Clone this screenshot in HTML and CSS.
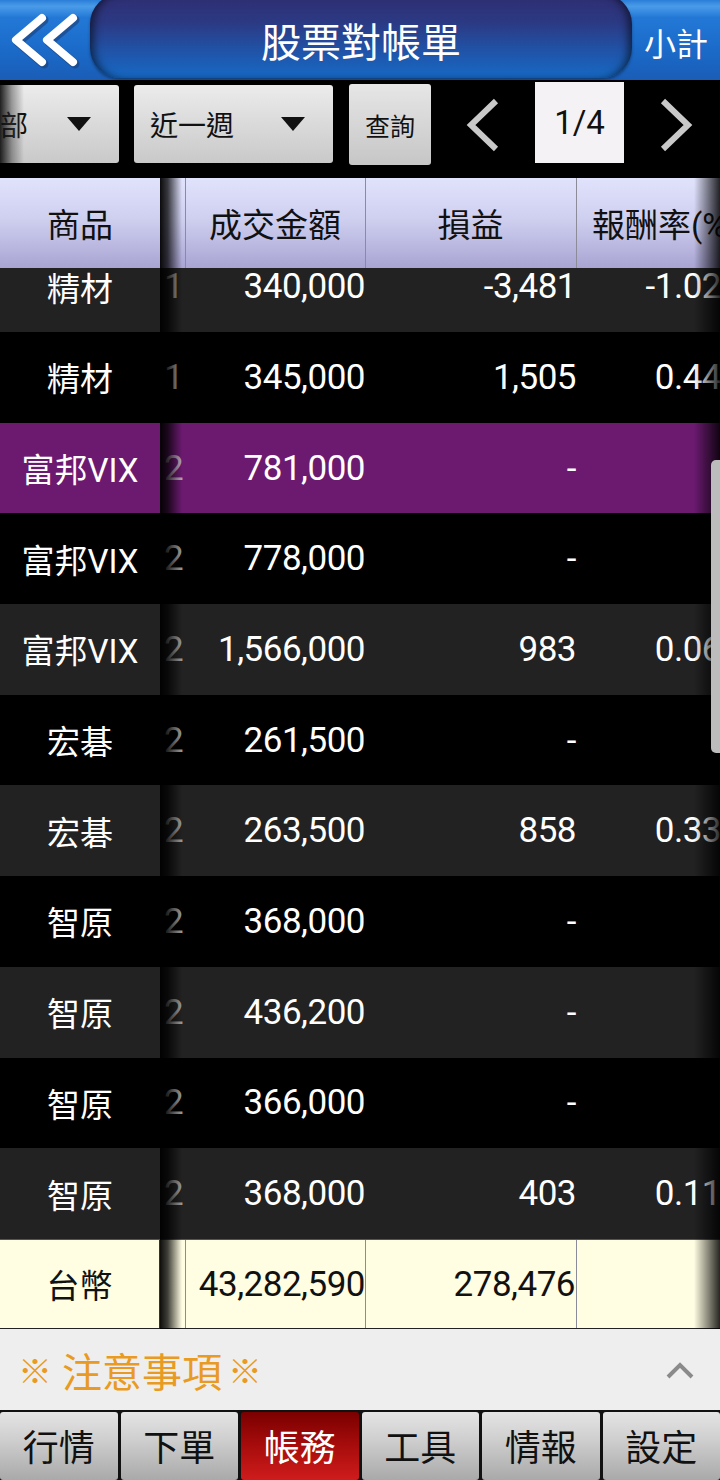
FILE: index.html
```html
<!DOCTYPE html>
<html>
<head>
	<meta charset="utf-8">
	<title>股票對帳單</title>
	<link rel="stylesheet" href="styles.css">
</head>
<body>
	<div class="app">
		<header class="topbar">
			<a class="back">
				<svg width="90" height="80" viewBox="0 0 90 80">
					<g fill="none" stroke="#1b3f78" stroke-width="9" stroke-linecap="round" stroke-linejoin="round" transform="translate(2,2)" opacity="0.6">
						<polyline points="42,18 16,40 42,62"/>
						<polyline points="73,18 47,40 73,62"/>
					</g>
					<g fill="none" stroke="#ffffff" stroke-width="8" stroke-linecap="round" stroke-linejoin="round">
						<polyline points="42,18 16,40 42,62"/>
						<polyline points="73,18 47,40 73,62"/>
					</g>
				</svg>
			</a>
			<div class="title">股票對帳單</div>
			<a class="subtotal">小計</a>
		</header>

		<div class="toolbar">
			<div class="select scope">
				<span>全部</span>
				<svg class="caret" width="24" height="14" viewBox="0 0 24 14"><polygon points="0,0 24,0 12,14" fill="#111"/></svg>
			</div>
			<div class="select period">
				<span>近一週</span>
				<svg class="caret" width="24" height="14" viewBox="0 0 24 14"><polygon points="0,0 24,0 12,14" fill="#111"/></svg>
			</div>
			<button class="query">查詢</button>
			<a class="pager">
				<svg width="36" height="56" viewBox="0 0 36 56"><polyline points="31,4 6,28 31,52" fill="none" stroke="#c9c9c9" stroke-width="6"/></svg>
			</a>
			<div class="page">1/4</div>
			<a class="pager next">
				<svg width="36" height="56" viewBox="0 0 36 56"><polyline points="5,4 30,28 5,52" fill="none" stroke="#c9c9c9" stroke-width="6"/></svg>
			</a>
		</div>

		<div class="grid">
			<div class="row thead">
				<div class="cell name">商品</div>
				<div class="cell qty"></div>
				<div class="cell amt">成交金額</div>
				<div class="cell pnl">損益</div>
				<div class="cell rate">報酬率(%)</div>
			</div>

			<div class="tbody">
				<div class="list">
					<div class="row">
						<div class="cell name">精材</div>
						<div class="cell qty">1</div>
						<div class="cell amt">340,000</div>
						<div class="cell pnl">-3,481</div>
						<div class="cell rate">-1.02</div>
					</div>
					<div class="row">
						<div class="cell name">精材</div>
						<div class="cell qty">1</div>
						<div class="cell amt">345,000</div>
						<div class="cell pnl">1,505</div>
						<div class="cell rate">0.44</div>
					</div>
					<div class="row selected">
						<div class="cell name">富邦VIX</div>
						<div class="cell qty">2</div>
						<div class="cell amt">781,000</div>
						<div class="cell pnl">-</div>
						<div class="cell rate"></div>
					</div>
					<div class="row">
						<div class="cell name">富邦VIX</div>
						<div class="cell qty">2</div>
						<div class="cell amt">778,000</div>
						<div class="cell pnl">-</div>
						<div class="cell rate"></div>
					</div>
					<div class="row">
						<div class="cell name">富邦VIX</div>
						<div class="cell qty">2</div>
						<div class="cell amt">1,566,000</div>
						<div class="cell pnl">983</div>
						<div class="cell rate">0.06</div>
					</div>
					<div class="row">
						<div class="cell name">宏碁</div>
						<div class="cell qty">2</div>
						<div class="cell amt">261,500</div>
						<div class="cell pnl">-</div>
						<div class="cell rate"></div>
					</div>
					<div class="row">
						<div class="cell name">宏碁</div>
						<div class="cell qty">2</div>
						<div class="cell amt">263,500</div>
						<div class="cell pnl">858</div>
						<div class="cell rate">0.33</div>
					</div>
					<div class="row">
						<div class="cell name">智原</div>
						<div class="cell qty">2</div>
						<div class="cell amt">368,000</div>
						<div class="cell pnl">-</div>
						<div class="cell rate"></div>
					</div>
					<div class="row">
						<div class="cell name">智原</div>
						<div class="cell qty">2</div>
						<div class="cell amt">436,200</div>
						<div class="cell pnl">-</div>
						<div class="cell rate"></div>
					</div>
					<div class="row">
						<div class="cell name">智原</div>
						<div class="cell qty">2</div>
						<div class="cell amt">366,000</div>
						<div class="cell pnl">-</div>
						<div class="cell rate"></div>
					</div>
					<div class="row">
						<div class="cell name">智原</div>
						<div class="cell qty">2</div>
						<div class="cell amt">368,000</div>
						<div class="cell pnl">403</div>
						<div class="cell rate">0.11</div>
					</div>
				</div>
			</div>

			<div class="row tfoot">
				<div class="cell name">台幣</div>
				<div class="cell qty"></div>
				<div class="cell amt">43,282,590</div>
				<div class="cell pnl">278,476</div>
				<div class="cell rate"></div>
			</div>

			<div class="shade-left"></div>
			<div class="shade-right"></div>
			<div class="scrollbar"></div>
		</div>

		<div class="notice">
			<span class="mark">※</span>
			<span class="notice-title">注意事項</span>
			<span class="mark">※</span>
			<svg class="toggle" width="28" height="18" viewBox="0 0 28 18"><polyline points="2,16 14,4 26,16" fill="none" stroke="#8a8a8a" stroke-width="4"/></svg>
		</div>

		<nav class="tabs">
			<a class="tab">行情</a>
			<a class="tab">下單</a>
			<a class="tab active">帳務</a>
			<a class="tab">工具</a>
			<a class="tab">情報</a>
			<a class="tab">設定</a>
		</nav>
	</div>
</body>
</html>
```

FILE: styles.css
```css
*{
	margin: 0;
	padding: 0;
	box-sizing: border-box;
}

body{
	width: 720px;
	height: 1480px;
	overflow: hidden;
	background-color: #000;
	font: normal 32px "Noto Sans CJK TC", "Noto Sans", sans-serif;
	color: #fff;
}

.app{
	display: flex;
	flex-direction: column;
	width: 720px;
	height: 1480px;
}

/* top bar */

.topbar{
	display: flex;
	height: 80px;
	background: linear-gradient(#2b7ed8 0%, #4a9ce8 8%, #2378d6 22%, #1b6bca 60%, #1a5db6 100%);
}

.back{
	display: flex;
	width: 90px;
}

.title{
	width: 542px;
	height: 84px;
	margin-top: -6px;
	border-radius: 30px;
	background: linear-gradient(#2f2d70 0%, #2b3a84 35%, #1f55aa 70%, #1769c4 100%);
	box-shadow: inset 8px 0 8px -4px rgba(0,0,0,.55), inset -8px 0 8px -4px rgba(0,0,0,.55), 0 2px 3px rgba(0,0,0,.35);

	font-size: 40px;
	line-height: 92px;
	text-align: center;
	color: #fff;
}

.subtotal{
	flex: 1;
	font-size: 32px;
	line-height: 84px;
	text-align: center;
	color: #fff;
}

/* toolbar */

.toolbar{
	position: relative;
	display: flex;
	align-items: flex-start;
	height: 98px;
	padding-top: 2px;
	overflow: hidden;
	color: #111;
}

.toolbar::before{
	content: "";
	position: absolute;
	left: 0;
	top: 5px;
	width: 24px;
	height: 78px;
	background: linear-gradient(to right, rgba(10,10,10,.9), rgba(60,60,60,.45) 50%, rgba(200,200,200,0));
}

.select{
	display: flex;
	align-items: center;
	justify-content: space-between;
	height: 78px;
	margin-top: 3px;
	padding: 0 28px 0 16px;
	border-radius: 3px;
	background: linear-gradient(#ececec, #dadada 50%, #c9c9c9);
	font-size: 28px;
}

.scope{
	width: 163px;
	margin-left: -44px;
}

.period{
	width: 199px;
	margin-left: 15px;
}

.query{
	width: 82px;
	height: 81px;
	margin: 2px 0 0 16px;
	border: 0;
	border-radius: 3px;
	background: linear-gradient(#e6e6e6, #d6d6d6 50%, #c6c6c6);
	font: normal 25px "Noto Sans CJK TC", sans-serif;
	color: #111;
}

.pager{
	display: flex;
	align-items: center;
	justify-content: center;
	width: 104px;
	height: 80px;
	padding-top: 6px;
}

.pager.next{
	width: 96px;
	padding-left: 8px;
}

.page{
	width: 89px;
	height: 81px;
	background-color: #f4f2f4;
	font-family: Roboto, "Noto Sans CJK TC", sans-serif;
	font-size: 33px;
	line-height: 81px;
	text-align: center;
	color: #111;
}

/* grid */

.grid{
	position: relative;
	display: flex;
	flex-direction: column;
	height: 1151px;
	overflow: hidden;
	font-family: Roboto, "Noto Sans CJK TC", sans-serif;
	font-size: 35px;
	letter-spacing: -0.5px;
}

.row{
	display: flex;
	flex-shrink: 0;
	height: 90.7px;
	align-items: stretch;
	white-space: nowrap;
}

.cell{
	flex-shrink: 0;
	display: flex;
	align-items: center;
	overflow: hidden;
}

.name{
	width: 160px;
	justify-content: center;
	font-size: 33px;
	letter-spacing: 0;
}

.qty{
	width: 26px;
	padding-left: 4px;
	color: #9a9a9a;
}

.amt{
	width: 180px;
	justify-content: flex-end;
	padding-right: 1px;
}

.pnl{
	width: 211px;
	justify-content: flex-end;
	padding-right: 1px;
}

.rate{
	width: 170px;
	justify-content: flex-end;
	padding-right: 26px;
}

.thead{
	height: 90px;
	background: linear-gradient(#e1e3fc, #cfd0f0 45%, #a9a4d3);
	color: #111;
	font-size: 33px;
	letter-spacing: 0;
}

.thead .rate{
	justify-content: flex-start;
	padding: 0 0 0 15px;
}

.thead .amt, .thead .pnl{
	justify-content: center;
}

.thead .qty, .thead .amt, .thead .pnl,
.tfoot .qty, .tfoot .amt, .tfoot .pnl{
	border-right: 1px solid #8c8c98;
}

.tbody{
	height: 971px;
	overflow: hidden;
}

.list{
	margin-top: -26.7px;
}

.list .row:nth-child(odd){
	background-color: #222222;
}

.list .row.selected{
	background-color: #6b1a70;
}

.list .row.selected .qty{
	color: #b9a0bb;
}

.tfoot{
	height: 90px;
	border-top: 1px solid #555;
	border-bottom: 1px solid #222;
	background-color: #fffde2;
	color: #111;
}

.tfoot .name{
	border-right: 1px solid #333;
}

.tfoot .amt{
	padding-right: 0;
}

.shade-left{
	position: absolute;
	left: 160px;
	top: 0;
	width: 22px;
	height: 1151px;
	background: linear-gradient(to right, rgba(0,0,0,.95), rgba(0,0,0,.75) 35%, rgba(0,0,0,0));
}

.shade-right{
	position: absolute;
	right: 0;
	top: 0;
	width: 26px;
	height: 1151px;
	background: linear-gradient(to right, rgba(0,0,0,0), rgba(0,0,0,.85));
}

.scrollbar{
	position: absolute;
	right: 0;
	top: 282px;
	width: 9px;
	height: 293px;
	border-radius: 5px 0 0 5px;
	background-color: #bcbcbc;
}

/* notice */

.notice{
	display: flex;
	align-items: center;
	height: 81px;
	padding: 0 26px 0 18px;
	background-color: #eeeeee;
	color: #e99a22;
	font-size: 40px;
}

.notice .mark{
	font-size: 34px;
}

.notice-title{
	margin: 0 6px 0 10px;
}

.toggle{
	margin-left: auto;
}

/* tabs */

.tabs{
	display: grid;
	grid-template-columns: repeat(6, 1fr);
	gap: 3px;
	height: 70px;
	padding-top: 2px;
	background-color: #111;
}

.tab{
	border-radius: 3px;
	background: linear-gradient(#e4e4e4, #cfcfcf 40%, #a9a9a9);
	font-size: 36px;
	line-height: 66px;
	text-align: center;
	color: #111;
}

.tab.active{
	background: linear-gradient(#7a0000, #a80c0c 50%, #cf1c1c);
	color: #fff;
}
```
